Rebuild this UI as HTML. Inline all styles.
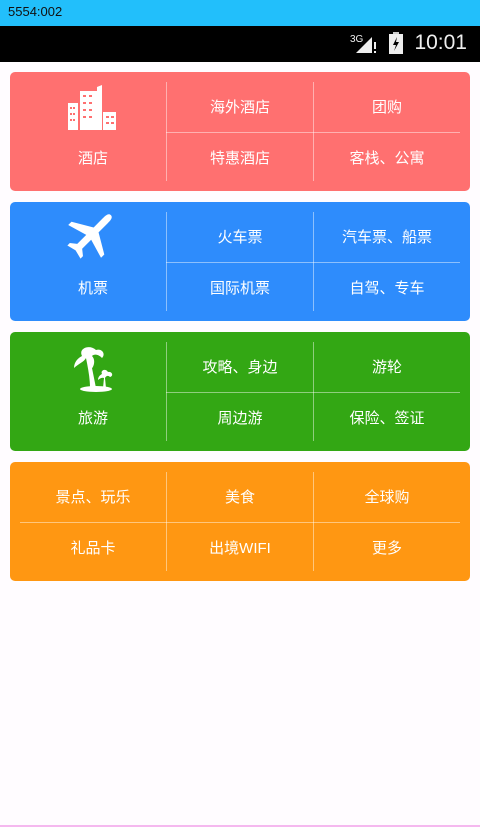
<!DOCTYPE html>
<html><head><meta charset="utf-8">
<style>
*{margin:0;padding:0;box-sizing:border-box}
body{width:480px;height:827px;background:#fffcff;position:relative;overflow:hidden;font-family:"Liberation Sans","Noto Sans CJK SC",sans-serif}
.top{position:absolute;left:0;top:0;width:480px;height:26px;background:#22bffb;color:#111;font-size:13px;line-height:24px;padding-left:8px}
.sb{position:absolute;left:0;top:26px;width:480px;height:36px;background:#000}
.time{position:absolute;right:13px;top:5px;color:#eee;font-size:21px}
.card{position:absolute;left:10px;width:460px;height:119px;border-radius:5px;color:#fff;font-size:15px}
.t{position:absolute;width:146px;text-align:center;line-height:20px}
.v{position:absolute;width:1px;top:10px;height:99px;background:rgba(255,255,255,.45)}
.h{position:absolute;height:1px;top:60px;right:10px;background:rgba(255,255,255,.45)}
.ic{position:absolute;left:55px;top:14px}
.bottom{position:absolute;left:0;bottom:0;width:480px;height:2px;background:#f5b8ef}
</style></head><body>
<div class="top">5554:002</div>
<div class="sb">
<svg style="position:absolute;left:350px;top:6px" width="30" height="24" viewBox="0 0 30 24">
<text x="0" y="10" fill="#eee" font-size="10" font-family="Liberation Sans">3G</text>
<polygon points="6,21 22,21 22,5" fill="#eee"/><rect x="24" y="10" width="2" height="7" fill="#eee"/><rect x="24" y="19" width="2" height="2" fill="#eee"/></svg>
<svg style="position:absolute;left:389px;top:6px" width="14" height="22" viewBox="0 0 14 22"><rect x="4" y="0" width="6" height="3" fill="#ccc"/><rect x="0" y="2" width="14" height="20" fill="#eee"/><path d="M8 5 L4 13 L7 13 L5 19 L10 10 L7 10 Z" fill="#000"/></svg>
<div class="time">10:01</div>
</div>

<div class="card" style="top:72px;background:#ff7070">
<svg class="ic" width="56" height="48" viewBox="0 0 56 48" style="left:58px;top:13px"><g fill="#fff">
<rect x="0" y="18" width="10" height="27"/><rect x="12" y="6" width="17" height="39"/><polygon points="29,2 34,0 34,45 29,45"/><rect x="35" y="27" width="13" height="18"/></g>
<g fill="#ff7070"><rect x="2" y="22" width="2" height="2"/><rect x="5" y="22" width="2" height="2"/><rect x="2" y="28" width="2" height="2"/><rect x="5" y="28" width="2" height="2"/><rect x="2" y="34" width="2" height="2"/><rect x="5" y="34" width="2" height="2"/>
<rect x="15" y="10" width="3" height="2"/><rect x="21" y="10" width="3" height="2"/><rect x="15" y="17" width="3" height="2"/><rect x="21" y="17" width="3" height="2"/><rect x="15" y="24" width="3" height="2"/><rect x="21" y="24" width="3" height="2"/><rect x="15" y="31" width="3" height="2"/><rect x="21" y="31" width="3" height="2"/>
<rect x="38" y="31" width="3" height="2"/><rect x="43" y="31" width="3" height="2"/><rect x="38" y="37" width="3" height="2"/><rect x="43" y="37" width="3" height="2"/></g></svg>
<div class="t" style="left:10px;top:77px">酒店</div>
<div class="v" style="left:156px"></div><div class="v" style="left:303px"></div><div class="h" style="left:156px"></div>
<div class="t" style="left:157px;top:26px">海外酒店</div><div class="t" style="left:304px;top:26px">团购</div>
<div class="t" style="left:157px;top:77px">特惠酒店</div><div class="t" style="left:304px;top:77px">客栈、公寓</div>
</div>

<div class="card" style="top:202px;background:#2e8cfc">
<svg class="ic" width="58" height="58" viewBox="0 0 50 50" style="left:53px;top:3px"><g fill="#fff" transform="rotate(45 25 25)">
<path d="M25 2 C28 2 28 6 28 9 L28 20 L45 30 L45 34 L28 29 L28 40 L33 44 L33 47 L25 45 L17 47 L17 44 L22 40 L22 29 L5 34 L5 30 L22 20 L22 9 C22 6 22 2 25 2Z"/></g></svg>
<div class="t" style="left:10px;top:77px">机票</div>
<div class="v" style="left:156px"></div><div class="v" style="left:303px"></div><div class="h" style="left:156px"></div>
<div class="t" style="left:157px;top:26px">火车票</div><div class="t" style="left:304px;top:26px">汽车票、船票</div>
<div class="t" style="left:157px;top:77px">国际机票</div><div class="t" style="left:304px;top:77px">自驾、专车</div>
</div>

<div class="card" style="top:332px;background:#33a714">
<svg class="ic" width="50" height="48" viewBox="0 0 50 48" style="left:58px;top:14px"><g fill="#fff">
<path d="M14 10 C10 2 22 -2 28 4 C34 2 38 8 34 12 C30 8 26 8 24 10 C28 14 26 22 22 24 C22 18 20 14 18 12 C16 16 10 18 6 22 C6 16 10 12 14 10Z"/>
<path d="M18 12 L22 12 C24 22 26 32 28 42 L22 42 C22 32 20 22 18 12Z"/>
<path d="M34 28 C32 24 38 22 40 26 C44 25 46 30 42 31 C40 29 38 30 37 32 L38 42 L35 42 L36 32 C34 31 31 33 30 34 C30 31 32 29 34 28Z"/>
<ellipse cx="28" cy="43" rx="16" ry="3"/></g></svg>
<div class="t" style="left:10px;top:77px">旅游</div>
<div class="v" style="left:156px"></div><div class="v" style="left:303px"></div><div class="h" style="left:156px"></div>
<div class="t" style="left:157px;top:26px">攻略、身边</div><div class="t" style="left:304px;top:26px">游轮</div>
<div class="t" style="left:157px;top:77px">周边游</div><div class="t" style="left:304px;top:77px">保险、签证</div>
</div>

<div class="card" style="top:462px;background:#ff9712">
<div class="v" style="left:156px"></div><div class="v" style="left:303px"></div><div class="h" style="left:10px"></div>
<div class="t" style="left:10px;top:26px">景点、玩乐</div><div class="t" style="left:157px;top:26px">美食</div><div class="t" style="left:304px;top:26px">全球购</div>
<div class="t" style="left:10px;top:77px">礼品卡</div><div class="t" style="left:157px;top:77px">出境WIFI</div><div class="t" style="left:304px;top:77px">更多</div>
</div>
<div class="bottom"></div>
</body></html>
